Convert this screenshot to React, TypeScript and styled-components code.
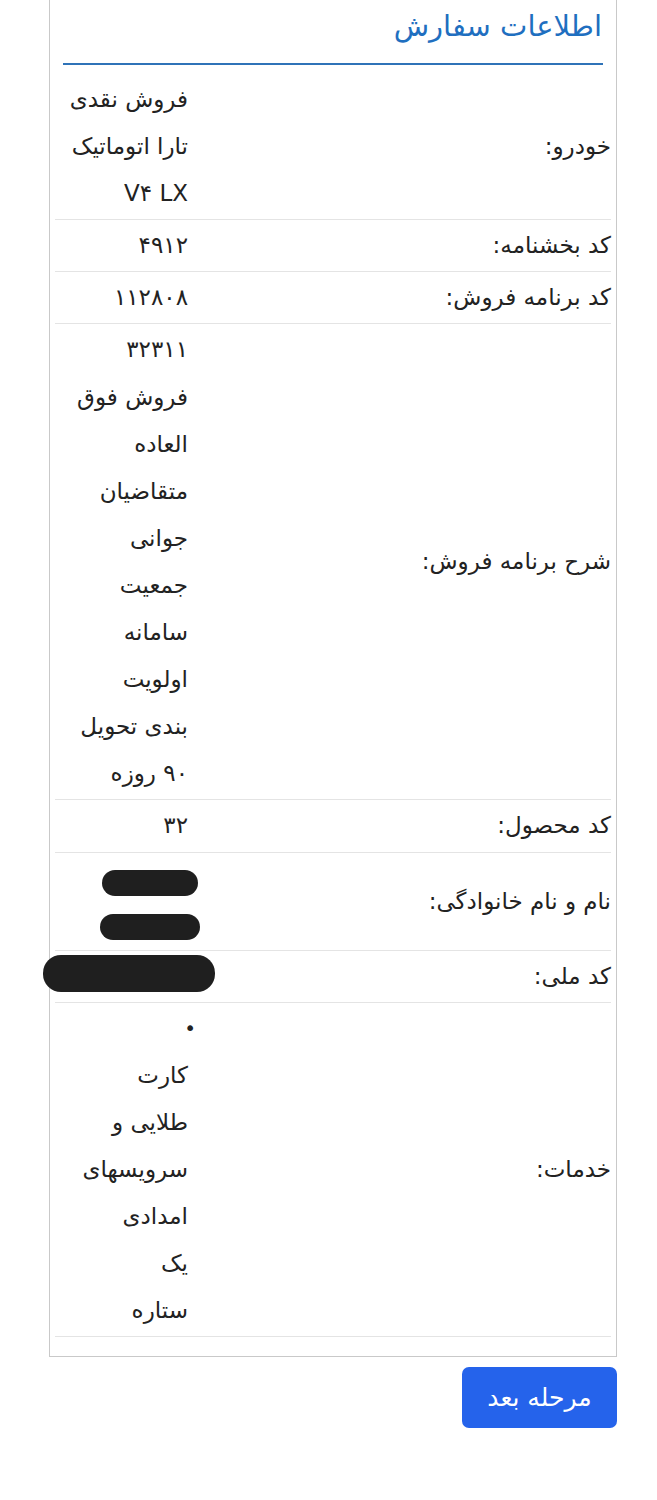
import React from "react";
import styled, { createGlobalStyle } from "styled-components";

const GlobalStyle = createGlobalStyle`
  html, body {
    margin: 0;
    padding: 0;
    background: #ffffff;
  }
  body {
    font-family: "DejaVu Sans", "Noto Sans", sans-serif;
    color: #222222;
  }
`;

type Row = {
  label: string;
  lines?: string[];
  redacted?: number[];
  bullet?: boolean;
};

const rows: Row[] = [
  { label: "خودرو:", lines: ["فروش نقدی", "تارا اتوماتیک", "V۴ LX"] },
  { label: "کد بخشنامه:", lines: ["۴۹۱۲"] },
  { label: "کد برنامه فروش:", lines: ["۱۱۲۸۰۸"] },
  {
    label: "شرح برنامه فروش:",
    lines: [
      "۳۲۳۱۱",
      "فروش فوق",
      "العاده",
      "متقاضیان",
      "جوانی",
      "جمعیت",
      "سامانه",
      "اولویت",
      "بندی تحویل",
      "۹۰ روزه",
    ],
  },
  { label: "کد محصول:", lines: ["۳۲"] },
  { label: "نام و نام خانوادگی:", redacted: [96, 100] },
  { label: "کد ملی:", redacted: [172] },
  {
    label: "خدمات:",
    bullet: true,
    lines: ["کارت", "طلایی و", "سرویسهای", "امدادی", "یک", "ستاره"],
  },
];

export default function App() {
  return (
    <Page dir="rtl">
      <GlobalStyle />
      <Card>
        <Title>اطلاعات سفارش</Title>
        <Table>
          {rows.map((row) => (
            <TableRow key={row.label}>
              <Label>{row.label}</Label>
              <Value>
                {row.bullet && <Bullet>•</Bullet>}
                {row.lines?.map((line) => (
                  <Line key={line}>{line}</Line>
                ))}
                {row.redacted && (
                  <RedactGroup $single={row.redacted.length === 1}>
                    {row.redacted.map((w, i) => (
                      <Redaction key={i} style={{ width: w }} />
                    ))}
                  </RedactGroup>
                )}
              </Value>
            </TableRow>
          ))}
        </Table>
      </Card>
      <Actions>
        <NextButton>مرحله بعد</NextButton>
      </Actions>
    </Page>
  );
}

const Page = styled.div`
  width: 657px;
  padding: 0 40px 60px 49px;
  box-sizing: border-box;
`;

const Card = styled.section`
  margin-top: -10px;
  border: 1px solid #c9c9c9;
  padding: 10px 5px 19px;
  background: #fff;
`;

const Title = styled.h2`
  margin: 0 8px;
  padding: 7px 1px 19px;
  font-size: 29px;
  font-weight: 400;
  line-height: 36px;
  color: #1f6fc0;
  border-bottom: 2px solid #2f73b8;
`;

const Table = styled.div`
  margin-top: 9px;
`;

const TableRow = styled.div`
  display: grid;
  grid-template-columns: 1fr 136px;
  border-bottom: 1px solid #e4e4e4;
  padding: 2px 0 2px;
`;

const Label = styled.div`
  display: flex;
  align-items: center;
  font-size: 23px;
  line-height: 47px;
  white-space: nowrap;
`;

const Value = styled.div`
  padding-right: 3px;
  font-size: 23px;
  line-height: 47.1px;
`;

const Line = styled.div`
  white-space: nowrap;
`;

const Bullet = styled.div`
  margin-right: -8px;
  font-size: 20px;
`;

const RedactGroup = styled.div<{ $single: boolean }>`
  display: flex;
  flex-direction: column;
  align-items: center;
  gap: ${(p) => (p.$single ? 0 : "18px")};
  padding: ${(p) => (p.$single ? "2px 0 3px" : "15px 0 8px")};
  margin-right: ${(p) => (p.$single ? "-27px" : "-14px")};
  width: ${(p) => (p.$single ? "172px" : "104px")};
`;

const Redaction = styled.div`
  height: 26px;
  border-radius: 13px;
  background: #1f1f1f;
  &:only-child {
    height: 37px;
    border-radius: 18px;
  }
`;

const Actions = styled.div`
  display: flex;
  justify-content: flex-start;
  padding-top: 10px;
`;

const NextButton = styled.button`
  width: 155px;
  height: 61px;
  border: none;
  border-radius: 7px;
  background: #2563eb;
  color: #ffffff;
  font-family: "DejaVu Sans", "Noto Sans", sans-serif;
  font-size: 25px;
  cursor: pointer;
`;
